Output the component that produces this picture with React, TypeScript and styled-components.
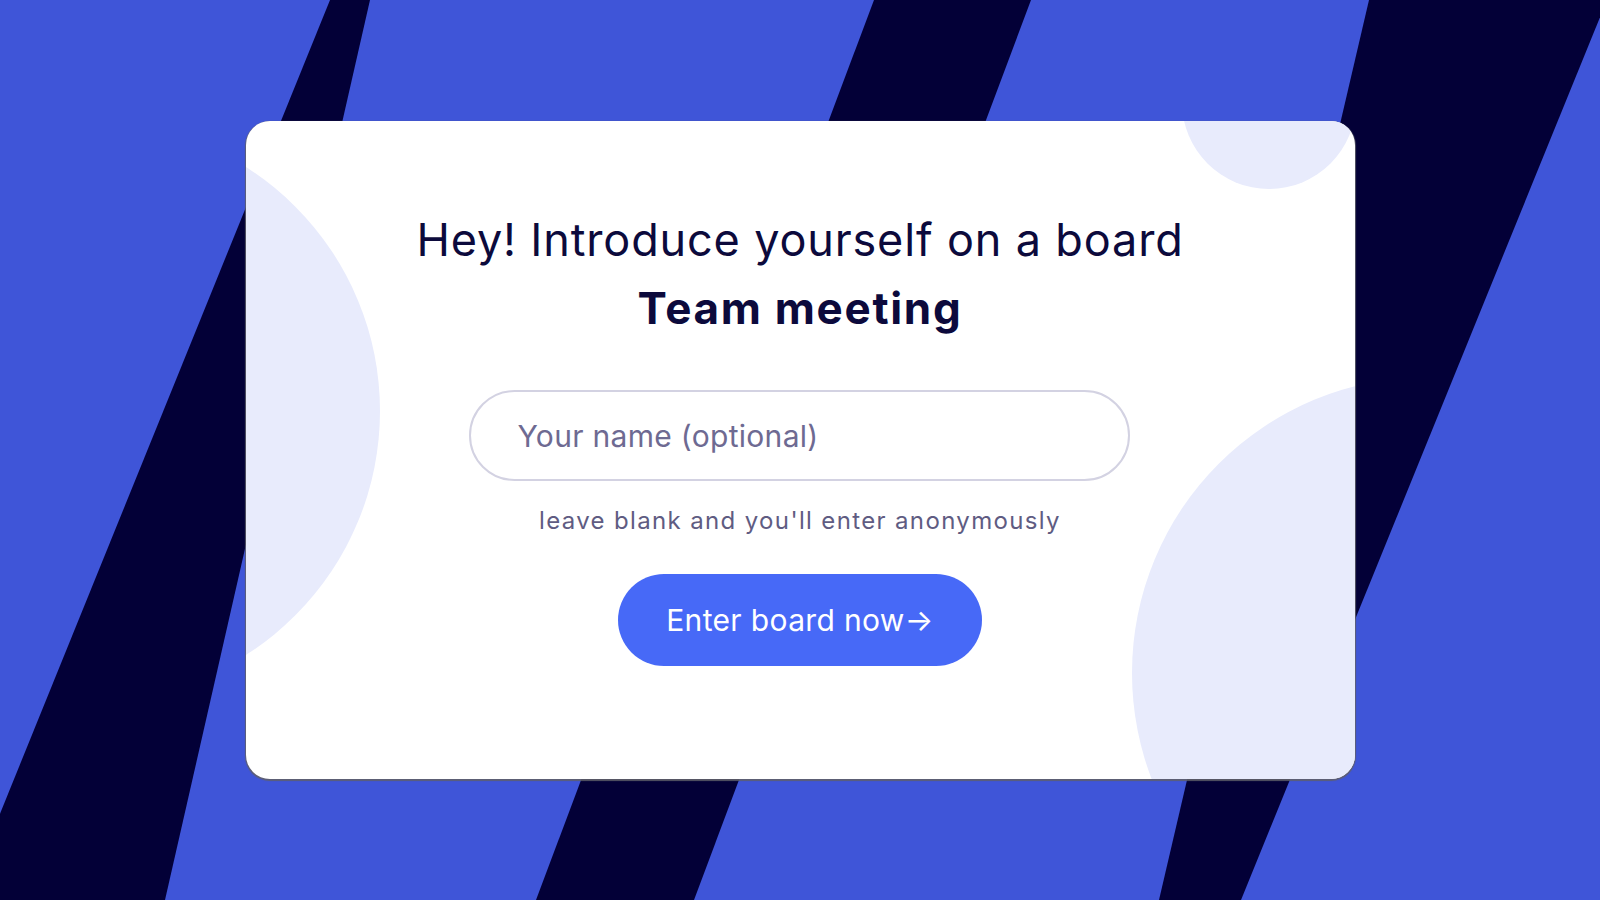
import React from 'react'
import styled, { createGlobalStyle } from 'styled-components'

const GlobalStyle = createGlobalStyle`
  html, body {
    margin: 0;
    padding: 0;
    width: 100%;
    height: 100%;
    overflow: hidden;
  }
  body {
    font-family: 'Inter', 'Noto Sans', sans-serif;
  }
  #root {
    height: 100%;
  }
`

const Page = styled.div`
  position: relative;
  width: 100vw;
  height: 100vh;
  background: #3f55d8;
  display: flex;
  align-items: center;
  justify-content: center;
  overflow: hidden;
`

const Stripes = styled.svg`
  position: absolute;
  inset: 0;
  width: 100%;
  height: 100%;
`

const Card = styled.div`
  position: relative;
  width: 1109px;
  height: 658px;
  box-sizing: border-box;
  background: #ffffff;
  border-radius: 24px;
  box-shadow: 0 1px 1px 1px rgba(95, 95, 105, 0.9);
  overflow: hidden;
  display: flex;
  flex-direction: column;
  align-items: center;
  padding-top: 89px;
`

const Blob = styled.div<{ $size: number; $x: number; $y: number }>`
  position: absolute;
  left: ${p => p.$x}px;
  top: ${p => p.$y}px;
  width: ${p => p.$size}px;
  height: ${p => p.$size}px;
  border-radius: 50%;
  background: #e8ebfc;
`

const Content = styled.div`
  position: relative;
  z-index: 1;
  display: flex;
  flex-direction: column;
  align-items: center;
`

const Heading = styled.h1`
  margin: 0;
  font-family: 'Inter', sans-serif;
  font-size: 45px;
  line-height: 60px;
  font-weight: 400;
  letter-spacing: 0.85px;
  color: #0c0a3c;
  text-align: center;
`

const BoardName = styled.h2`
  margin: 10px 0 0;
  font-family: 'Inter', sans-serif;
  font-size: 44px;
  line-height: 56px;
  font-weight: 700;
  letter-spacing: 1.7px;
  color: #0c0a3c;
  text-align: center;
`

const NameInput = styled.input`
  margin-top: 54px;
  width: 661px;
  height: 91px;
  box-sizing: border-box;
  border: 2px solid #d3d2e2;
  border-radius: 46px;
  padding: 0 46px;
  font-family: 'Inter', sans-serif;
  font-size: 30px;
  letter-spacing: 0.3px;
  color: #2a2750;
  background: #ffffff;
  outline: none;

  &::placeholder {
    color: #6e6a92;
  }
`

const Hint = styled.p`
  margin: 25px 0 0;
  font-family: 'Inter', sans-serif;
  font-size: 24px;
  line-height: 30px;
  letter-spacing: 1.35px;
  color: #5f5c82;
  text-align: center;
`

const EnterButton = styled.button`
  margin-top: 38px;
  width: 364px;
  height: 92px;
  border: none;
  border-radius: 46px;
  background: #4769f7;
  color: #ffffff;
  font-family: 'Inter', sans-serif;
  font-size: 30px;
  letter-spacing: 0.35px;
  cursor: pointer;
`

export default function App() {
  return (
    <>
      <GlobalStyle />
      <Page>
        <Stripes viewBox="0 0 1600 900" preserveAspectRatio="none">
          <polygon points="330,0 370,0 165,900 -35,900" fill="#030037" />
          <polygon points="874,0 1031,0 694,900 536,900" fill="#030037" />
          <polygon points="1369,0 1607,0 1241,900 1159,900" fill="#030037" />
        </Stripes>
        <Card>
          <Blob $size={578} $x={-444} $y={1} />
          <Blob $size={174} $x={936} $y={-106} />
          <Blob $size={592} $x={886} $y={256} />
          <Content>
            <Heading>Hey! Introduce yourself on a board</Heading>
            <BoardName>Team meeting</BoardName>
            <NameInput placeholder="Your name (optional)" />
            <Hint>leave blank and you'll enter anonymously</Hint>
            <EnterButton>Enter board now→</EnterButton>
          </Content>
        </Card>
      </Page>
    </>
  )
}
